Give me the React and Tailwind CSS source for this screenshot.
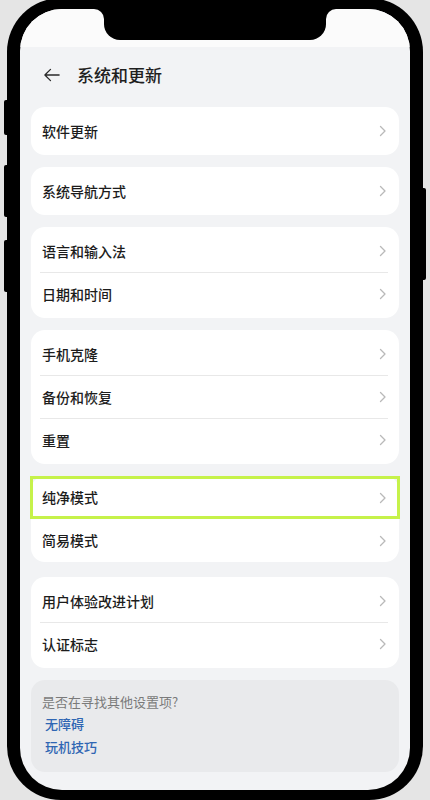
import React from 'react';

const Chevron = () => (
  <svg width="8" height="12" viewBox="0 0 8 12" fill="none">
    <path d="M1.5 1.5L6 6l-4.5 4.5" stroke="#b9b9b9" strokeWidth="1.3" strokeLinecap="round" strokeLinejoin="round" />
  </svg>
);

function Row({ label, h = 'h-[42px]' }) {
  return (
    <div className={`${h} flex items-center justify-between pl-[11px] pr-[12px]`}>
      <span className="text-[14px] font-medium text-[#1c1c1c]">{label}</span>
      <Chevron />
    </div>
  );
}

const Divider = () => <div className="h-px bg-[#e8e8e8] ml-[9px] mr-[11px]" />;

function Card({ items, className = '' }) {
  return (
    <div className={`bg-white rounded-[14px] py-[3px] ${className}`}>
      {items.map((label, i) => (
        <React.Fragment key={label}>
          {i > 0 && <Divider />}
          <Row label={label} />
        </React.Fragment>
      ))}
    </div>
  );
}

export default function App() {
  return (
    <div className="relative w-[430px] h-[800px] overflow-hidden bg-[#e5e5e5] font-['Noto_Sans_CJK_SC','Noto_Sans',sans-serif]">
      {/* Side buttons */}
      <div className="absolute left-[4px] top-[100px] w-[6px] h-[35px] bg-black rounded-l-[2px]" />
      <div className="absolute left-[4px] top-[165px] w-[6px] h-[52px] bg-black rounded-l-[2px]" />
      <div className="absolute left-[4px] top-[240px] w-[6px] h-[52px] bg-black rounded-l-[2px]" />
      <div className="absolute right-[4px] top-[188px] w-[6px] h-[92px] bg-black rounded-r-[2px]" />

      {/* Phone frame */}
      <div className="relative mx-[7px] mt-[-2px] h-[802px] rounded-[54px] bg-black pt-[11px] px-[13px] pb-[10px]">
        <div className="relative h-full rounded-[42px] bg-[#f2f3f5] overflow-hidden flex flex-col">
          {/* Status area + notch */}
          <div className="h-[38px] shrink-0 bg-[#fbfbfb]" />
          <div className="absolute top-0 left-1/2 -translate-x-1/2 w-[222px] h-[31px] bg-black rounded-b-[16px]">
            <div className="absolute top-0 left-[-10px] w-[10px] h-[10px] bg-black">
              <div className="w-full h-full bg-[#fbfbfb] rounded-tr-[10px]" />
            </div>
            <div className="absolute top-0 right-[-10px] w-[10px] h-[10px] bg-black">
              <div className="w-full h-full bg-[#fbfbfb] rounded-tl-[10px]" />
            </div>
          </div>

          {/* Header */}
          <div className="h-[56px] shrink-0 flex items-center pl-[23px]">
            <svg width="18" height="18" viewBox="0 0 24 24" fill="none">
              <path d="M21.5 12H3M10 4.5L2.5 12l7.5 7.5" stroke="#2a2a2a" strokeWidth="1.7" strokeLinecap="round" strokeLinejoin="round" />
            </svg>
            <h1 className="ml-[16px] text-[17px] font-medium text-[#1f1f1f]">系统和更新</h1>
          </div>

          {/* List */}
          <div className="mt-[4px] px-[11px] flex flex-col gap-[12px]">
            <Card items={['软件更新']} />
            <Card items={['系统导航方式']} />
            <Card items={['语言和输入法', '日期和时间']} />
            <Card items={['手机克隆', '备份和恢复', '重置']} />

            <div className="relative bg-white rounded-[14px]">
              <Row label="纯净模式" h="h-[43px]" />
              <Row label="简易模式" h="h-[43px]" />
              <div className="absolute left-[-1px] right-[-1px] top-0 h-[43px] border-[3px] border-[#c6f24a]" />
            </div>

            <Card className="mt-[3px]" items={['用户体验改进计划', '认证标志']} />

            <div className="h-[92px] bg-[#e9eaec] rounded-[14px] px-[11px] pt-[12px]">
              <p className="text-[13px] leading-[20px] text-[#7a7a7a]">是否在寻找其他设置项?</p>
              <p className="mt-[1px] pl-[3px] text-[13px] leading-[22px] font-medium text-[#2f66b3]">无障碍</p>
              <p className="pl-[3px] text-[13px] leading-[23px] font-medium text-[#2f66b3]">玩机技巧</p>
            </div>
          </div>
        </div>
      </div>
    </div>
  );
}
